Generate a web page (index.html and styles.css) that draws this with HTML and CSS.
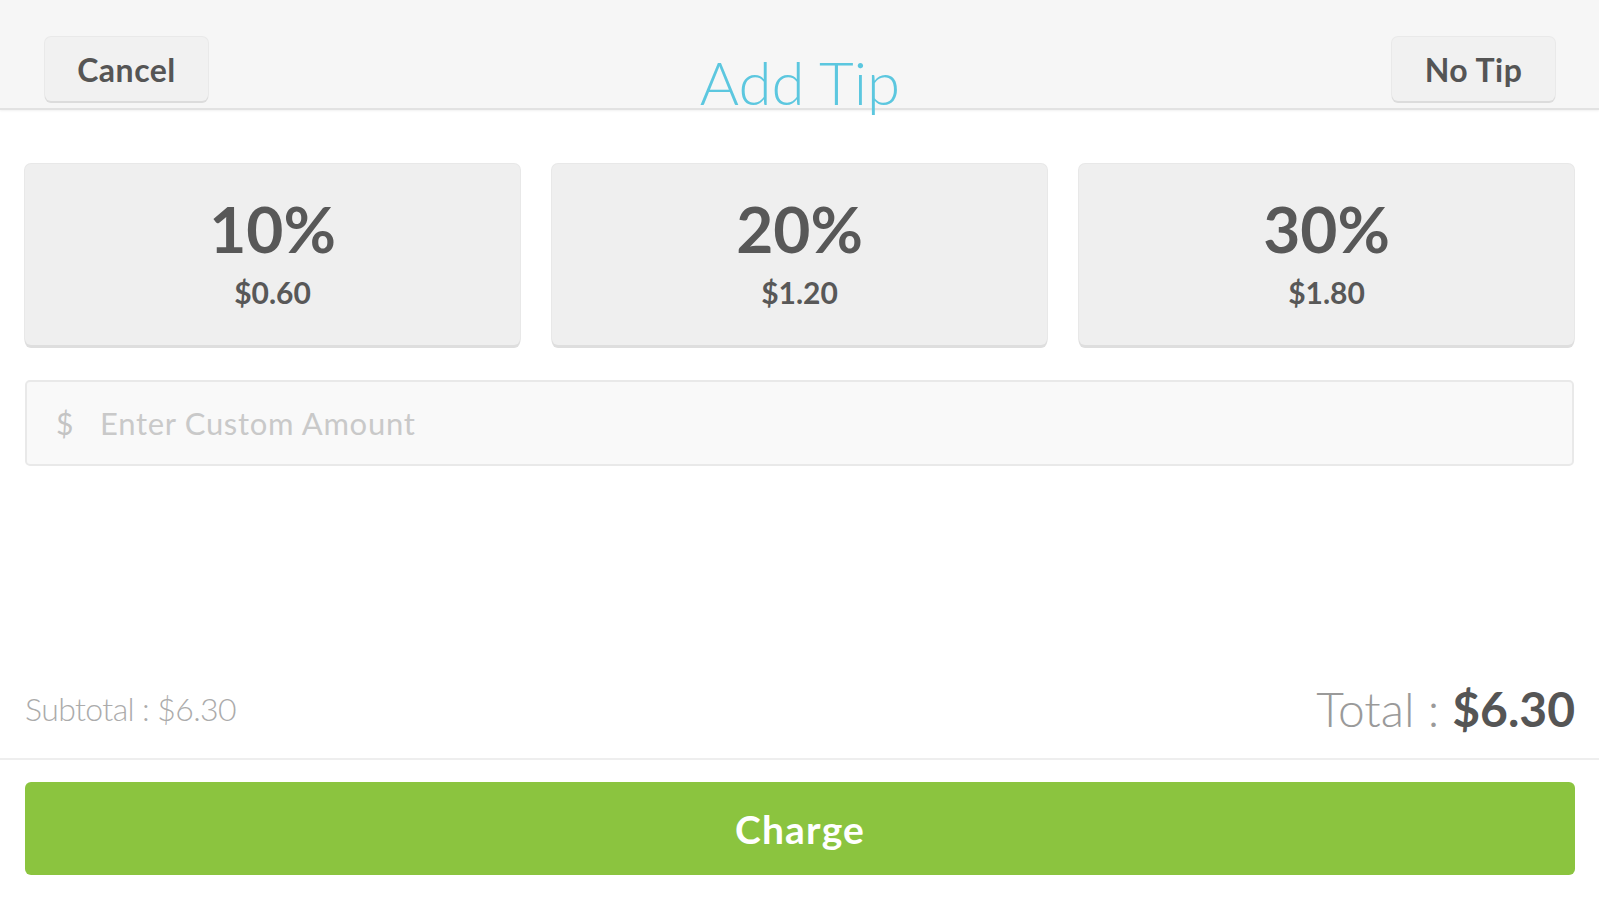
FILE: index.html
```html
<!DOCTYPE html>
<html lang="en">
<head>
<meta charset="utf-8">
<title>Add Tip</title>
<link rel="stylesheet" href="styles.css">
</head>
<body>
<div class="page">
  <header class="header">
    <div class="header-left"><button class="hbtn">Cancel</button></div>
    <h1 class="title">Add Tip</h1>
    <div class="header-right"><button class="hbtn">No Tip</button></div>
  </header>
  <main class="main">
    <div class="tips">
      <button class="tip"><span class="pct">10%</span><span class="amt">$0.60</span></button>
      <button class="tip"><span class="pct">20%</span><span class="amt">$1.20</span></button>
      <button class="tip"><span class="pct">30%</span><span class="amt">$1.80</span></button>
    </div>
    <label class="custom">
      <span class="cur">$</span>
      <input class="custom-input" type="text" placeholder="Enter Custom Amount">
    </label>
  </main>
  <footer class="footer">
    <div class="totals">
      <span class="subtotal">Subtotal : $6.30</span>
      <span class="total">Total : <b>$6.30</b></span>
    </div>
    <div class="charge-wrap">
      <button class="charge">Charge</button>
    </div>
  </footer>
</div>
</body>
</html>
```

FILE: styles.css
```css
* { box-sizing: border-box; }
html, body { margin: 0; padding: 0; }
body {
  font-family: Lato, "Open Sans", "Liberation Sans", sans-serif;
  background: #ffffff;
  color: #555555;
}
.page {
  height: 900px;
  display: flex;
  flex-direction: column;
}
.header {
  height: 110px;
  background: #f6f6f6;
  border-bottom: 2px solid #e2e2e2;
  box-shadow: 0 1px 2px rgba(0,0,0,0.06);
  display: grid;
  grid-template-columns: 1fr auto 1fr;
  padding: 0 44px 0 45px;
  flex: none;
}
.header-left { display: flex; justify-content: flex-start; align-items: flex-start; }
.header-right { display: flex; justify-content: flex-end; align-items: flex-start; }
.hbtn {
  margin-top: 37px;
  width: 163px;
  height: 64px;
  border: none;
  border-radius: 6px;
  background: #f1f1f1;
  box-shadow: 0 2px 0 #dcdcdc, 0 0 0 1px #e9e9e9;
  font-family: inherit;
  font-weight: 700;
  font-size: 32px;
  letter-spacing: 0.5px;
  color: #555555;
  padding: 0;
}
.title {
  margin: 52px 0 0 0;
  font-weight: 300;
  font-size: 60px;
  line-height: 1;
  color: #5cc7df;
  white-space: nowrap;
}
.main {
  flex: 1;
  padding: 54px 25px 0 25px;
}
.tips {
  display: grid;
  grid-template-columns: repeat(3, 1fr);
  gap: 32px;
}
.tip {
  height: 181px;
  border: none;
  border-radius: 6px;
  background: #efefef;
  box-shadow: 0 3px 0 #dedede, 0 0 0 1px #e8e8e8;
  display: flex;
  flex-direction: column;
  align-items: center;
  padding: 33px 0 0 0;
  gap: 16px;
  font-family: inherit;
  color: #585858;
}
.pct {
  font-size: 64px;
  font-weight: 700;
  line-height: 1;
}
.amt {
  font-size: 30px;
  font-weight: 700;
  line-height: 1;
}
.custom {
  margin-top: 35px;
  height: 86px;
  display: flex;
  align-items: center;
  background: #f9f9f9;
  border: 2px solid #e9e9e9;
  border-radius: 5px;
  padding: 0 0 0 29px;
}
.cur {
  font-size: 30px;
  color: #c4c4c4;
  width: 44px;
}
.custom-input {
  flex: 1;
  border: none;
  background: transparent;
  font-family: inherit;
  font-size: 31px;
  letter-spacing: 0.7px;
  color: #555;
  outline: none;
  padding: 0;
}
.custom-input::placeholder { color: #c9c9c9; }
.footer { flex: none; }
.totals {
  display: flex;
  justify-content: space-between;
  align-items: center;
  padding: 0 24px 22px 25px;
  height: 76px;
  line-height: 1;
}
.subtotal {
  font-size: 32px;
  font-weight: 300;
  color: #ababab;
  letter-spacing: -0.6px;
}
.total {
  font-size: 48px;
  font-weight: 300;
  color: #9a9a9a;
}
.total b {
  font-weight: 700;
  color: #555555;
}
.charge-wrap {
  border-top: 2px solid #eeeeee;
  padding: 22px 24px 25px 25px;
}
.charge {
  width: 100%;
  height: 93px;
  border: none;
  border-radius: 6px;
  background: #8bc43f;
  color: #ffffff;
  font-family: inherit;
  font-weight: 700;
  font-size: 39px;
  letter-spacing: 1.2px;
  padding: 0;
}
```
